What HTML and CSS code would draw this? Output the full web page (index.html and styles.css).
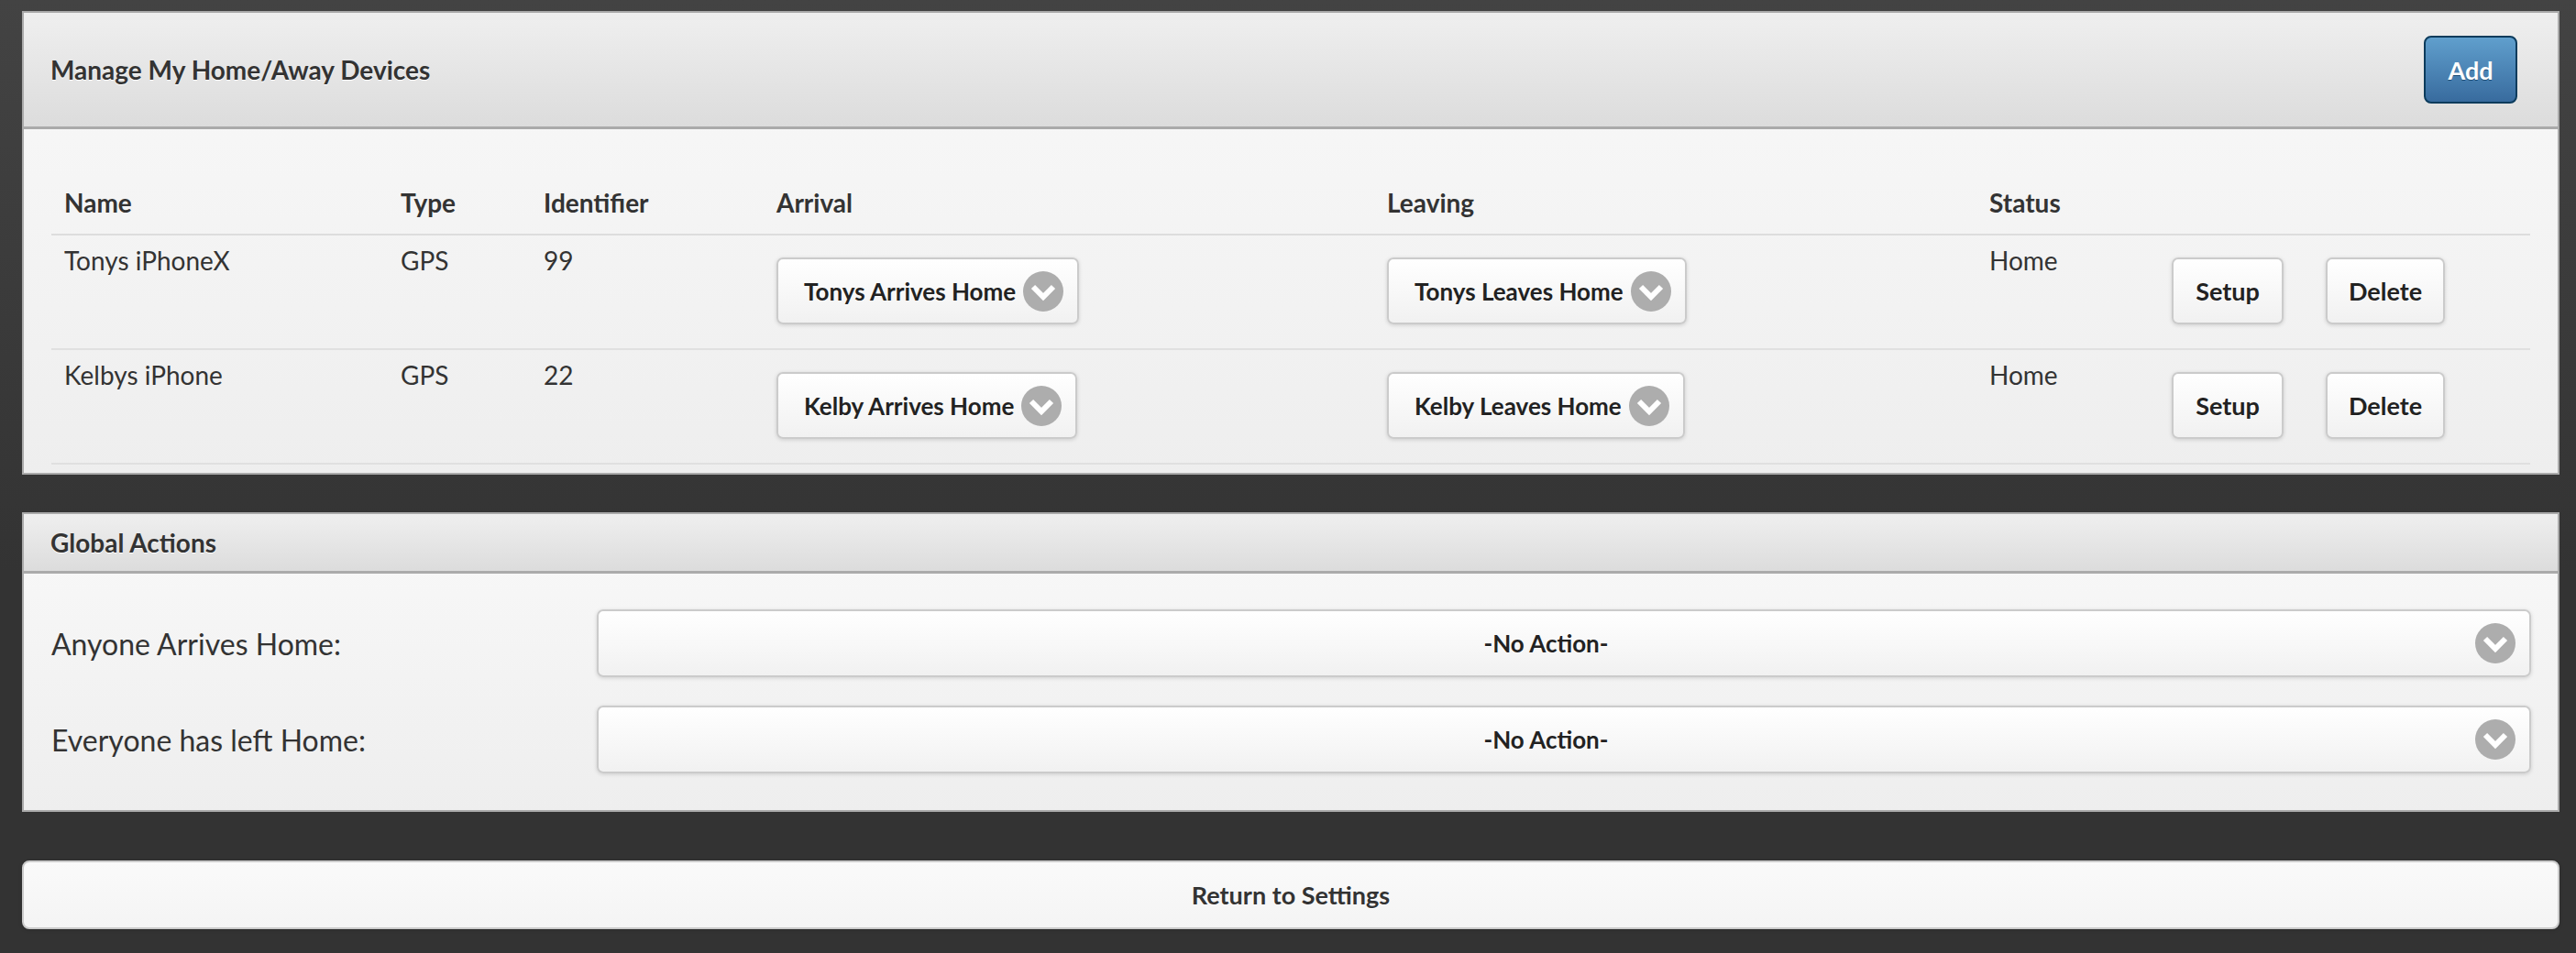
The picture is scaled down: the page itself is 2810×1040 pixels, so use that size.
FILE: index.html
```html
<!DOCTYPE html>
<html>
<head>
  <title>Home/Away Devices</title>
  <link rel="stylesheet" href="styles.css">
</head>
<body>
  <div class="panel">
    <div class="panel-head">
      <h3>Manage My Home/Away Devices</h3>
      <button class="btn btn-blue">Add</button>
    </div>
    <div class="panel-body">
      <table class="devices">
        <thead>
          <tr>
            <th class="col-name">Name</th>
            <th class="col-type">Type</th>
            <th class="col-id">Identifier</th>
            <th class="col-arrival">Arrival</th>
            <th class="col-leaving">Leaving</th>
            <th class="col-status">Status</th>
            <th class="col-setup"></th>
            <th class="col-delete"></th>
          </tr>
        </thead>
        <tbody>
          <tr>
            <td class="txt">Tonys iPhoneX</td>
            <td class="txt">GPS</td>
            <td class="txt">99</td>
            <td><div class="btn select">Tonys Arrives Home<span class="select-icon"><svg viewBox="0 0 44 44" width="44" height="44"><circle cx="22" cy="22" r="22" fill="#adadad"/><polyline points="11,17 22,28 33,17" fill="none" stroke="#fff" stroke-width="6"/></svg></span></div></td>
            <td><div class="btn select">Tonys Leaves Home<span class="select-icon"><svg viewBox="0 0 44 44" width="44" height="44"><circle cx="22" cy="22" r="22" fill="#adadad"/><polyline points="11,17 22,28 33,17" fill="none" stroke="#fff" stroke-width="6"/></svg></span></div></td>
            <td class="txt">Home</td>
            <td><button class="btn btn-setup">Setup</button></td>
            <td><button class="btn btn-delete">Delete</button></td>
          </tr>
          <tr>
            <td class="txt">Kelbys iPhone</td>
            <td class="txt">GPS</td>
            <td class="txt">22</td>
            <td><div class="btn select">Kelby Arrives Home<span class="select-icon"><svg viewBox="0 0 44 44" width="44" height="44"><circle cx="22" cy="22" r="22" fill="#adadad"/><polyline points="11,17 22,28 33,17" fill="none" stroke="#fff" stroke-width="6"/></svg></span></div></td>
            <td><div class="btn select">Kelby Leaves Home<span class="select-icon"><svg viewBox="0 0 44 44" width="44" height="44"><circle cx="22" cy="22" r="22" fill="#adadad"/><polyline points="11,17 22,28 33,17" fill="none" stroke="#fff" stroke-width="6"/></svg></span></div></td>
            <td class="txt">Home</td>
            <td><button class="btn btn-setup">Setup</button></td>
            <td><button class="btn btn-delete">Delete</button></td>
          </tr>
        </tbody>
      </table>
    </div>
  </div>

  <div class="panel">
    <div class="panel-head small">
      <h3>Global Actions</h3>
    </div>
    <div class="panel-body actions">
      <div class="action-row">
        <label class="action-label">Anyone Arrives Home:</label>
        <div class="btn select wide">-No Action-<span class="select-icon"><svg viewBox="0 0 44 44" width="44" height="44"><circle cx="22" cy="22" r="22" fill="#adadad"/><polyline points="11,17 22,28 33,17" fill="none" stroke="#fff" stroke-width="6"/></svg></span></div>
      </div>
      <div class="action-row">
        <label class="action-label">Everyone has left Home:</label>
        <div class="btn select wide">-No Action-<span class="select-icon"><svg viewBox="0 0 44 44" width="44" height="44"><circle cx="22" cy="22" r="22" fill="#adadad"/><polyline points="11,17 22,28 33,17" fill="none" stroke="#fff" stroke-width="6"/></svg></span></div>
      </div>
    </div>
  </div>

  <button class="btn return-btn">Return to Settings</button>
</body>
</html>
```

FILE: styles.css
```css
html {
  background: #333;
}
body {
  margin: 0;
  padding: 12px 18px 27px 24px;
  min-height: 1040px;
  box-sizing: border-box;
  background: linear-gradient(#434343, #333 60%);
  font-family: Lato, "Open Sans", sans-serif;
  color: #333;
}
.panel {
  border: 2px solid #aaa;
  background: linear-gradient(#f9f9f9, #eee);
  margin-bottom: 41px;
}
.panel-head {
  display: flex;
  align-items: center;
  justify-content: space-between;
  height: 124px;
  padding: 0 44px 0 29px;
  background: linear-gradient(#efefef, #dcdcdc);
  border-bottom: 3px solid #aaa;
}
.panel-head h3 {
  margin: 0;
  font-size: 28px;
  font-weight: bold;
  color: #333;
  text-shadow: 0 1px 0 #fff;
}
.panel-head.small {
  height: 62px;
}
.panel-head.small h3 {
  font-size: 28px;
}
.panel-body {
  padding: 30px 30px 9px;
}

/* device table */
.devices {
  width: 100%;
  table-layout: fixed;
  border-collapse: separate;
  border-spacing: 0;
}
.devices th,
.devices td {
  box-sizing: border-box;
}
.devices th {
  text-align: left;
  vertical-align: bottom;
  padding: 33px 14px 17px;
  font-size: 28px;
  line-height: 34px;
  font-weight: bold;
  color: #333;
  border-bottom: 2px solid #ddd;
}
.col-name { width: 367px; }
.col-type { width: 156px; }
.col-id { width: 254px; }
.col-arrival { width: 666px; }
.col-leaving { width: 657px; }
.col-status { width: 199px; }
.col-setup { width: 168px; }
.devices td {
  vertical-align: top;
  padding: 24px 14px 26px;
  border-bottom: 2px solid #e0e0e0;
}
.devices td.txt {
  padding-top: 9px;
  font-size: 28px;
  line-height: 36px;
  color: #333;
}

/* buttons */
.btn {
  display: inline-flex;
  align-items: center;
  justify-content: center;
  box-sizing: border-box;
  height: 73px;
  padding: 0 26px;
  border: 2px solid #cbcbcb;
  border-radius: 7px;
  background: linear-gradient(#fff, #f1f1f1);
  box-shadow: 0 1px 4px rgba(0,0,0,0.15);
  font-family: Lato, "Open Sans", sans-serif;
  font-size: 27px;
  font-weight: bold;
  color: #222;
  text-shadow: 0 1px 0 #fff;
  white-space: nowrap;
  cursor: pointer;
}
.btn-blue {
  width: 102px;
  height: 74px;
  padding: 0;
  border: 2px solid #0b3b5c;
  border-radius: 8px;
  background: linear-gradient(#609fcd, #386b9e);
  color: #fff;
  text-shadow: 0 1px 0 #1a4b73;
  box-shadow: none;
}
.btn-setup { width: 122px; padding: 0; }
.btn-delete { width: 130px; padding: 0; }

.select {
  position: relative;
  padding: 0 67px 0 28px;
  font-size: 26px;
}
.select-icon {
  position: absolute;
  right: 15px;
  top: 50%;
  width: 44px;
  height: 44px;
  margin-top: -22px;
}
.select-icon svg {
  display: block;
}
.select.wide {
  display: flex;
  flex: 1;
  height: 74px;
}

/* global actions */
.panel-body.actions {
  display: flex;
  flex-direction: column;
  gap: 31px;
  padding: 39px 29px 40px 30px;
}
.action-row {
  display: flex;
  align-items: center;
}
.action-label {
  width: 595px;
  font-size: 32px;
  color: #333;
}

.return-btn {
  display: flex;
  width: 100%;
  height: 75px;
  margin-top: 53px;
  border-radius: 8px;
  background: linear-gradient(#fafafa, #f4f4f4);
  font-size: 27px;
  color: #333;
}
```
